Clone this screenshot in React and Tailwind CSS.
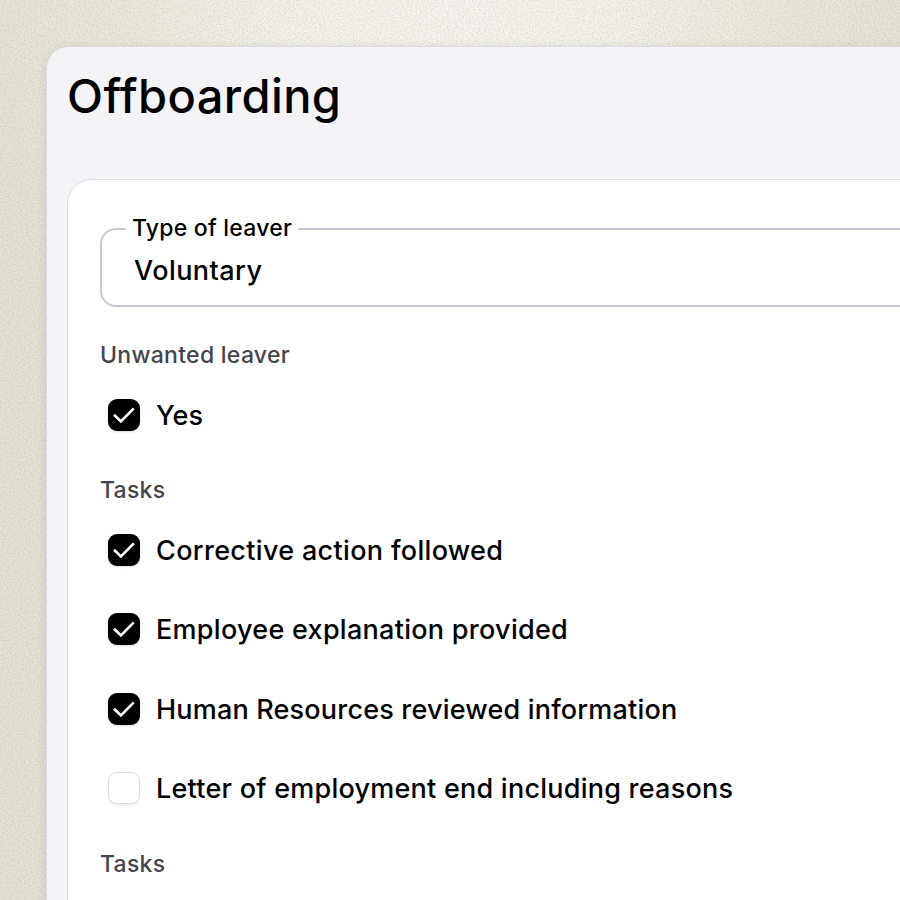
import React from "react";

const TASKS = [
  { label: "Corrective action followed", checked: true, spacing: "tracking-[0.33px]" },
  { label: "Employee explanation provided", checked: true, spacing: "tracking-[0.28px]" },
  { label: "Human Resources reviewed information", checked: true, spacing: "tracking-[0.19px]" },
  { label: "Letter of employment end including reasons", checked: false, spacing: "tracking-[0.24px]" },
];

function Grain() {
  return (
    <svg className="absolute inset-0 h-full w-full" aria-hidden="true">
      <filter id="grain" colorInterpolationFilters="sRGB">
        <feTurbulence type="fractalNoise" baseFrequency="0.62" numOctaves="1" seed="4" />
        <feColorMatrix values="0 0 0 0 0.66  0 0 0 0 0.63  0 0 0 0 0.5  2.6 0 0 0 -1" />
      </filter>
      <rect width="100%" height="100%" filter="url(#grain)" opacity="0.25" />
    </svg>
  );
}

function Checkbox({ label, checked, spacing }) {
  return (
    <label className="flex h-8 items-center gap-4 pl-2">
      <span
        className={`flex size-8 shrink-0 items-center justify-center rounded-[9px] ${
          checked
            ? "bg-black shadow-[0_1px_2px_rgba(0,0,0,0.15)]"
            : "border border-[#dcdbe5] bg-white shadow-[0_2px_3px_rgba(0,0,0,0.07)]"
        }`}
      >
        {checked ? (
          <svg width="32" height="32" viewBox="0 0 32 32" fill="none" stroke="white" strokeWidth="2.6">
            <path d="M6 15.7L12.9 22.4L25.8 9.3" />
          </svg>
        ) : null}
      </span>
      <span className={`whitespace-nowrap pt-0.5 text-[27px] leading-8 font-medium text-black ${spacing}`}>{label}</span>
    </label>
  );
}

function SectionLabel({ children, spacing }) {
  return <div className={`text-[23px] leading-8 font-medium text-[#454450] ${spacing}`}>{children}</div>;
}

export default function App() {
  return (
    <div className="relative h-[900px] w-[900px] overflow-hidden bg-[#e5e2d6] bg-[radial-gradient(ellipse_490px_460px_at_450px_0px,#f6f4f1_0%,#f2f1ec_35%,#ebe9df_65%,#e5e2d6_100%)] pt-[46px] pl-[46px] font-['Inter','Liberation_Sans',sans-serif]">
      <Grain />
      <main className="relative h-[900px] w-[1000px] rounded-[22px] border border-[#d9d8da] bg-[#f4f3f8] pt-[21px] pl-5 shadow-[0_2px_10px_rgba(80,75,50,0.14)]">
        <h1 className="text-[47px] leading-[56px] font-medium tracking-[0.4px] text-black">Offboarding</h1>
        <section className="mt-[55px] h-[800px] rounded-[25px] rounded-r-none border border-[#dcdbe5] bg-white pt-8 pl-8">
          <fieldset className="h-[95px] rounded-[16px] border-2 border-[#cac8d7] pl-6">
            <legend className="h-[33px] pr-1.5 pl-1.5 text-[23px] leading-8 font-medium tracking-[0.23px] text-black">
              Type of leaver
            </legend>
            <div className="pt-2.5 pl-2 text-[27px] leading-8 font-medium tracking-[0.45px] text-black">Voluntary</div>
          </fieldset>

          <div className="mt-8">
            <SectionLabel spacing="tracking-[0.28px]">Unwanted leaver</SectionLabel>
            <div className="mt-7">
              <Checkbox label="Yes" checked spacing="tracking-[0.1px]" />
            </div>
          </div>

          <div className="mt-[43px]">
            <SectionLabel spacing="tracking-[0.25px]">Tasks</SectionLabel>
            <div className="mt-7 flex flex-col gap-[47.4px]">
              {TASKS.map((task) => (
                <Checkbox key={task.label} {...task} />
              ))}
            </div>
          </div>

          <div className="mt-11">
            <SectionLabel spacing="tracking-[0.25px]">Tasks</SectionLabel>
          </div>
        </section>
      </main>
    </div>
  );
}
